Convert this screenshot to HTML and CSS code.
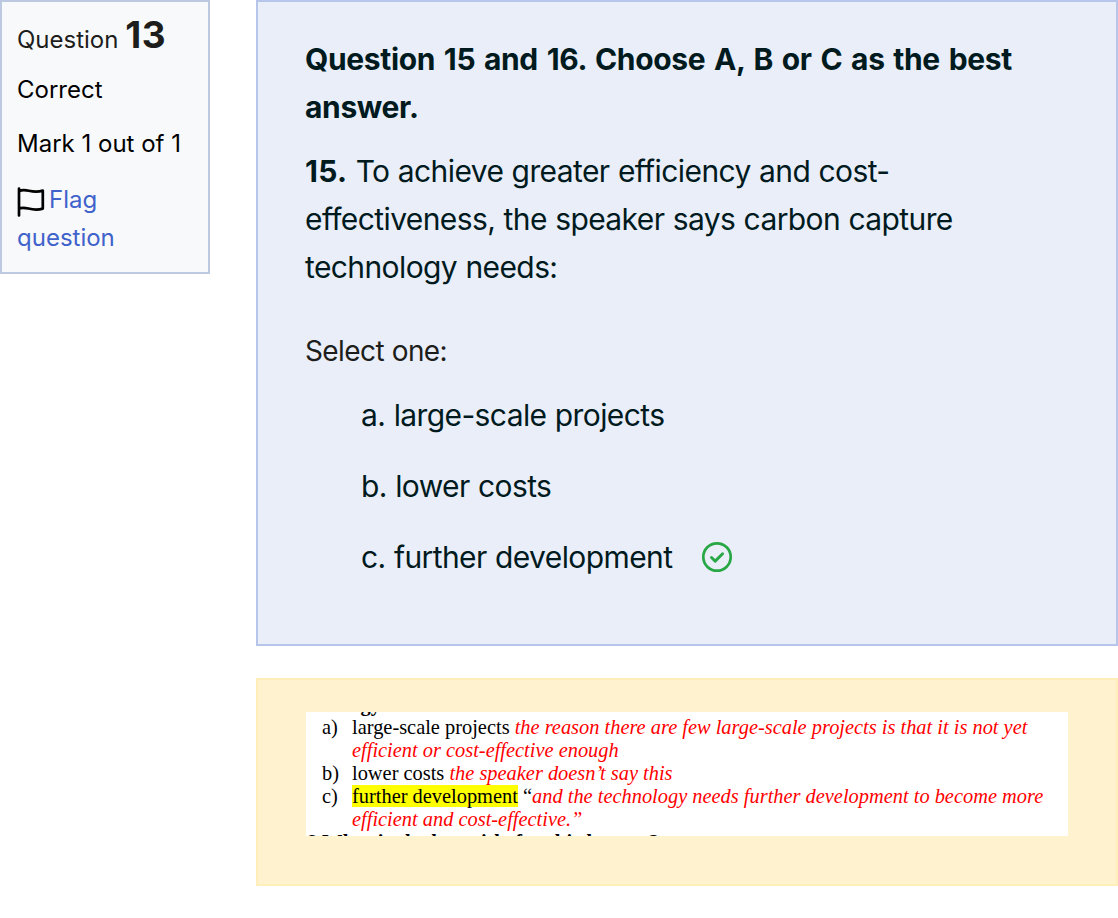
FILE: index.html
```html
<!DOCTYPE html>
<html lang="en">
<head>
  <meta charset="UTF-8">
  <title>Question 13</title>
  <meta name="viewport" content="width=device-width, initial-scale=1">
  <link rel="stylesheet" href="styles.css">
</head>
<body>
  <div class="question">
    <aside class="info">
      <h3 class="number">Question <span class="qno">13</span></h3>
      <div class="state">Correct</div>
      <div class="grade">Mark 1 out of 1</div>
      <a class="flag" href="#"><svg class="flag-icon" viewBox="0 0 28 30" fill="none" stroke="#000" stroke-width="2.7" stroke-linecap="round" stroke-linejoin="round"><path d="M2 1.5V28.5M2 4.3C9 0.2 14 7.3 25.8 3.6V21.6C14 25.3 9 18.2 2 21.6"/></svg>Flag<br>question</a>
    </aside>

    <main class="content">
      <section class="formulation">
        <p class="qtext"><strong>Question 15 and 16. Choose A, B or C as the best<br>answer.</strong></p>
        <p class="qtext"><strong>15.</strong> To achieve greater efficiency and cost-<br>effectiveness, the speaker says carbon capture<br>technology needs:</p>
        <div class="prompt">Select one:</div>
        <div class="answers">
          <div class="answer">a. large-scale projects</div>
          <div class="answer">b. lower costs</div>
          <div class="answer">c. further development
            <svg class="check" viewBox="0 0 32 32" fill="none" stroke="#28a745"><circle cx="16" cy="16" r="13.7" stroke-width="2.7"/><path d="M10.5 16.5l3.7 3.6 7.4-7.4" stroke-width="2.9" stroke-linecap="round" stroke-linejoin="round"/></svg>
          </div>
        </div>
      </section>

      <section class="feedback">
        <div class="extract">
          <div class="line cut-top">energy</div>
          <div class="line"><span class="mark">a)</span><span>large-scale projects <em>the reason there are few large-scale projects is that it is not yet</em></span></div>
          <div class="line"><span class="mark"></span><em>efficient or cost-effective enough</em></div>
          <div class="line"><span class="mark">b)</span><span>lower costs <em>the speaker doesn’t say this</em></span></div>
          <div class="line"><span class="mark">c)</span><span><span class="highlight">further development</span> “<em>and the technology needs further development to become more</em></span></div>
          <div class="line"><span class="mark"></span><em>efficient and cost-effective.”</em></div>
          <div class="line cut-bottom"><span class="num">6.</span>What is the best title for this lecture?</div>
        </div>
      </section>
    </main>
  </div>
</body>
</html>
```
FILE: styles.css
```css
* {
  box-sizing: border-box;
}
body {
  margin: 0;
  background: #fff;
  color: #001a1e;
  font-family: Inter, sans-serif;
  white-space: nowrap;
}
.question {
  display: flex;
  align-items: flex-start;
  gap: 46px;
}
.info {
  width: 210px;
  height: 274px;
  padding: 13px 15px;
  border: 2px solid #bcc9e0;
  background: #f8f9fb;
  color: #000;
  font-size: 24px;
  line-height: 38px;
}
.number {
  margin: 0;
  color: #1d1d1b;
  font-size: 24px;
  font-weight: 400;
  line-height: 40px;
}
.qno {
  font-size: 37px;
  font-weight: 700;
  letter-spacing: 0.5px;
}
.state {
  margin-top: 11px;
}
.grade {
  margin-top: 16px;
}
.flag {
  display: block;
  margin-top: 18px;
  color: #3f62cb;
  text-decoration: none;
}
.flag-icon {
  width: 28px;
  height: 30px;
  margin-right: 4px;
  vertical-align: -9px;
}
.content {
  width: 862px;
}
.formulation {
  height: 646px;
  padding: 33px 47px;
  border: 2px solid #b8c5ea;
  background: #eaeef9;
  font-size: 30px;
  letter-spacing: -0.6px;
  word-spacing: 0.5px;
  line-height: 48px;
}
.qtext {
  margin: 0 0 16px;
}
.qtext strong {
  letter-spacing: -0.35px;
  word-spacing: 2px;
}
.qtext + .qtext strong {
  letter-spacing: 0.3px;
}
.prompt {
  margin-top: 36px;
  color: #1d1d1b;
  font-size: 28px;
}
.answers {
  margin-top: 16px;
  padding-left: 56px;
}
.answer {
  display: flex;
  align-items: center;
  height: 48px;
  margin-bottom: 23px;
}
.check {
  width: 32px;
  height: 32px;
  margin-left: 29px;
}
.feedback {
  height: 208px;
  margin-top: 32px;
  padding: 32px 48px;
  border: 2px solid #ffeeba;
  background: #fff2ce;
}
.extract {
  width: 762px;
  height: 124px;
  overflow: hidden;
  background: #fff;
  color: #000;
  font-family: "Liberation Serif", serif;
  font-size: 20.4px;
  line-height: 23px;
}
.line {
  display: flex;
  padding-left: 16px;
}
.line em {
  color: #f00;
}
.mark {
  width: 30px;
}
.highlight {
  background: #ff0;
}
/* neighbouring lines of the extract, mostly clipped */
.cut-top {
  margin-top: -19px;
  font-weight: 700;
}
.cut-bottom {
  padding-left: 0;
  font-weight: 700;
  letter-spacing: 0.4px;
}
.num {
  width: 16px;
}
```
